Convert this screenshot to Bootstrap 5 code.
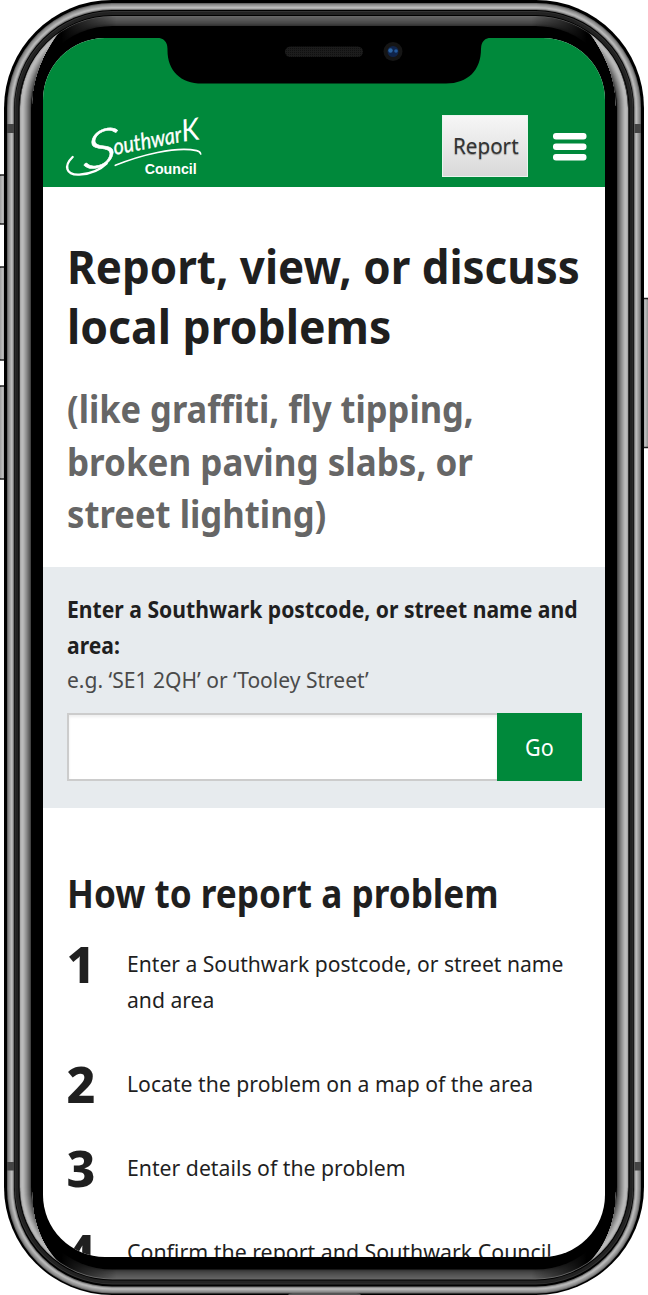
<!DOCTYPE html>
<html lang="en">
<head>
<meta charset="utf-8">
<meta name="viewport" content="width=device-width, initial-scale=1">
<title>Southwark Council – Report a problem</title>
<link href="https://cdn.jsdelivr.net/npm/bootstrap@5.3.0/dist/css/bootstrap.min.css" rel="stylesheet">
<style>
  :root { --green: #00893b; --ink: #1f1f1f; }
  body { font-family: "Noto Sans", "Open Sans", sans-serif; color: var(--ink); background: #fff; overflow: hidden; }
  .phone { width: 648px; height: 1295px; padding: 38px 43px 38px 42.5px; }
  .shell { inset: 0; width: 648px; height: 1295px; }
  .screen { height: 1218.5px; border-radius: 62px; background: #fff; z-index: 1; }
  .site-header { height: 149px; background: var(--green); padding: 77px 19px 9px 23.5px; }
  .logo { width: 140px; height: 64px; margin-top: -1px; overflow: visible; }
  .btn-report { width: 86px; height: 62px; border: 1px solid #e9f5ee; border-radius: 0; background: linear-gradient(#f6f6f6, #d9d9d9); color: #333; font-size: 22.5px; padding: 0 0 0 10px; text-shadow: 0 1px 1px #999; margin-right: 25px; }
  .burger { width: 34px; height: 28px; margin: 17.5px -0.5px 0 0; }
  .intro { height: 380px; padding: 49px 24px 0; }
  .ln { display: block; white-space: nowrap; }
  .ln > span { display: inline-block; transform-origin: 0 50%; }
  h1 { font-size: 47px; font-weight: 700; line-height: 60px; margin: 0; }
  .tagline { font-size: 38px; font-weight: 700; line-height: 52.5px; color: #666; margin: 26px 0 0; }
  .finder { height: 241px; background: #e7ebee; padding: 25px 24px 0; }
  .finder label { font-size: 22.3px; font-weight: 700; line-height: 36px; }
  .hint { font-size: 22.5px; line-height: 32px; color: #4a4a4a; }
  .finder .input-group { width: 515px; height: 68px; margin-top: 17px; }
  .finder .form-control { border: 2px solid #ccc; border-right: 1px solid #bbb; border-radius: 0; box-shadow: inset 0 2px 3px #0001; }
  .finder .btn { width: 84.5px; background: var(--green); color: #fff; border: 0; border-radius: 0; font-size: 23px; padding: 0 0 0 28px; }
  .howto { padding: 59px 24px 0; }
  h2 { font-size: 39px; font-weight: 700; line-height: 52px; margin: 0 0 27px; }
  .steps li { margin-bottom: 48px; }
  .num { width: 60px; height: 36px; font-size: 50px; font-weight: 800; line-height: 36px; flex: none; }
  .step { font-size: 22.6px; line-height: 36px; }
</style>
<script src="https://cdn.jsdelivr.net/npm/bootstrap@5.3.0/dist/js/bootstrap.bundle.min.js"></script>
</head>
<body>
<div class="phone position-relative">
  <svg class="shell position-absolute" viewBox="0 0 648 1295" aria-hidden="true">
    <defs>
      <linearGradient id="btnL"><stop offset="0" stop-color="#888"/><stop offset=".5" stop-color="#bbb"/><stop offset="1" stop-color="#777"/></linearGradient>
      <clipPath id="sides">
        <path d="M0 107H20C21 75 38 42 66 24C50 42 32 70 32 107V1190C32 1225 44 1250 64 1267C38 1253 20 1225 20 1190H0Z"/>
        <path d="M648 107H628C627 75 610 42 582 24C598 42 616 70 616 107V1190C616 1225 604 1250 584 1267C610 1253 628 1225 628 1190H648Z"/>
      </clipPath>
      <linearGradient id="fade" gradientUnits="userSpaceOnUse" x1="0" x2="648" y1="0" y2="0"><stop offset=".095" stop-color="#000"/><stop offset=".18" stop-color="#000" stop-opacity="0"/><stop offset=".82" stop-color="#000" stop-opacity="0"/><stop offset=".905" stop-color="#000"/></linearGradient>
    </defs>
    <g stroke="#222" stroke-width="1.6" fill="url(#btnL)">
      <rect x="-2" y="175" width="9" height="49" rx="3"/>
      <rect x="-2" y="267" width="9" height="93" rx="3"/>
      <rect x="-2" y="386" width="9" height="93" rx="3"/>
      <rect x="641" y="298.500" width="9" height="149" rx="3"/>
    </g>
    <rect x="4" y="0" width="640" height="1295" rx="108" fill="#000"/>
    <g id="band"></g>
    <g id="rim"></g>
    <rect x="20" y="16.500" width="608" height="1262" rx="92" fill="url(#fade)"/>
    <g id="sideRim" clip-path="url(#sides)"></g>
    <g fill="#444"><path d="M7 124h7v9H7zM634.500 124h6.500v9h-6.500zM7 1162h7v8.500H7zM634.500 1162h6.500v8.500h-6.500z"/></g>
    <path d="M288 1295Q289 1293 293 1293H356Q360 1293 361 1295Z" fill="#555"/>
  </svg>

  <div class="screen position-relative overflow-hidden">
    <header class="site-header d-flex align-items-start">
      <svg class="logo me-auto" viewBox="0 0 420 192" fill="none" stroke="#fff" stroke-linecap="round" role="img" aria-label="Southwark Council">
        <path d="M20 129C-8 156 0 184 40 182C70 180 102 168 122 148" stroke-width="7"/>
        <path d="M148 154C222 124 330 96 392 110Q403 113 404 120" stroke-width="5"/>
        <g fill="#fff" stroke="none">
          <text transform="translate(42 168) rotate(-8) skewX(-22) scale(1.200 1)" font-family="Lato" font-weight="300" font-size="158" stroke="#fff" stroke-width="1.500">S</text>
          <text transform="translate(146 123) rotate(-11)" font-family="Lato" font-style="italic" font-weight="400" font-size="68" textLength="208" lengthAdjust="spacingAndGlyphs" stroke="#fff" stroke-width="1">outhwar</text>
          <text transform="translate(350 83) rotate(-8)" font-family="Lato" font-style="italic" font-size="92" textLength="54" lengthAdjust="spacingAndGlyphs">K</text>
          <text x="236" y="179" font-family="Liberation Sans" font-weight="700" font-size="42" textLength="156" lengthAdjust="spacingAndGlyphs">Council</text>
        </g>
      </svg>
      <button class="btn btn-report"><span class="ln text-start"><span data-w="66">Report</span></span></button>
      <svg class="burger" viewBox="0 0 34 28" fill="#fff"><rect width="33.500" height="6.500" rx="3"/><rect y="10.500" width="33.500" height="6.500" rx="3"/><rect y="21" width="33.500" height="6.500" rx="3"/></svg>
    </header>

    <section class="intro">
      <h1><span class="ln"><span data-w="513">Report, view, or discuss</span></span><span class="ln"><span data-w="324">local problems</span></span></h1>
      <h2 class="tagline"><span class="ln"><span data-w="407">(like graffiti, fly tipping,</span></span><span class="ln"><span data-w="406">broken paving slabs, or</span></span><span class="ln"><span data-w="259">street lighting)</span></span></h2>
    </section>

    <section class="finder">
      <label for="place" class="d-block"><span class="ln"><span data-w="511">Enter a Southwark postcode, or street name and</span></span><span class="ln"><span data-w="53">area:</span></span></label>
      <div class="hint"><span class="ln"><span data-w="302">e.g. ‘SE1 2QH’ or ‘Tooley Street’</span></span></div>
      <div class="input-group"><input id="place" class="form-control"><button class="btn"><span class="ln text-start"><span data-w="29">Go</span></span></button></div>
    </section>

    <section class="howto">
      <h2><span class="ln"><span data-w="432">How to report a problem</span></span></h2>
      <ol class="steps list-unstyled m-0">
        <li class="d-flex"><div class="num">1</div><div class="step"><span class="ln"><span data-w="436">Enter a Southwark postcode, or street name</span></span><span class="ln"><span data-w="87">and area</span></span></div></li>
        <li class="d-flex"><div class="num">2</div><div class="step"><span class="ln"><span data-w="406">Locate the problem on a map of the area</span></span></div></li>
        <li class="d-flex"><div class="num">3</div><div class="step"><span class="ln"><span data-w="279">Enter details of the problem</span></span></div></li>
        <li class="d-flex"><div class="num">4</div><div class="step"><span class="ln"><span data-w="425">Confirm the report and Southwark Council</span></span></div></li>
      </ol>
    </section>
  </div>

  <svg class="shell position-absolute z-1" viewBox="0 0 648 1295" aria-hidden="true">
    <defs><pattern id="mesh" width="2" height="2" patternUnits="userSpaceOnUse"><rect width="2" height="2" fill="#1c1c1c"/><rect width="1" height="1" fill="#101010"/></pattern></defs>
    <path d="M156 37.500Q167.500 38 167.500 49C167 70 180 83.500 202 83.500H446C468 83.500 481 70 481 49Q481 38 492 37.500Z" fill="#000"/>
    <rect x="285" y="46.500" width="78" height="10.500" rx="5.200" fill="url(#mesh)"/>
    <circle cx="393" cy="51.500" r="9.500" fill="#151515"/><circle cx="393" cy="51.500" r="5.500" fill="#10244a"/>
    <circle cx="390.500" cy="50.500" r="2.200" fill="#2d65a3"/><circle cx="396" cy="51" r="1.800" fill="#245a9c"/>
  </svg>
</div>
<script>
  document.querySelectorAll('[data-w]').forEach(function (el) {
    el.style.transform = 'scaleX(' + el.dataset.w / el.offsetWidth + ')';
  });
  // Metal frame: concentric one-pixel rings, from the outside in
  function rings(id, left, top, right, bottom, radius, colours) {
    var g = document.getElementById(id), s = '';
    colours.forEach(function (c, i) {
      s += '<rect x="' + (left + i) + '" y="' + (top + i) + '" width="' + (648 - left - right - 2 * i) +
        '" height="' + (1295 - top - bottom - 2 * i) + '" rx="' + (radius - i) + '" fill="' + c + '"/>';
    });
    g.innerHTML = s;
  }
  rings('band', 7, 3, 7, 1.5, 105, ['#666', '#888', '#999', '#aaa', '#bbb', '#aaa', '#777', '#000']);
  rings('rim', 14.5, 11, 14.5, 10.5, 98, ['#333', '#222', '#242424', '#222', '#000', '#666', '#606060', '#5c5c5c', '#585858', '#545454', '#4e4e4e', '#4a4a4a', '#444', '#3c3c3c', '#333', '#000']);
  rings('sideRim', 20, 16, 20, 16, 92, ['#aaa', '#b8b8b8', '#bbb', '#b4b4b4', '#a8a8a8', '#9a9a9a', '#8c8c8c', '#7c7c7c', '#6c6c6c', '#5c5c5c', '#444', '#000']);
</script>
</body>
</html>
